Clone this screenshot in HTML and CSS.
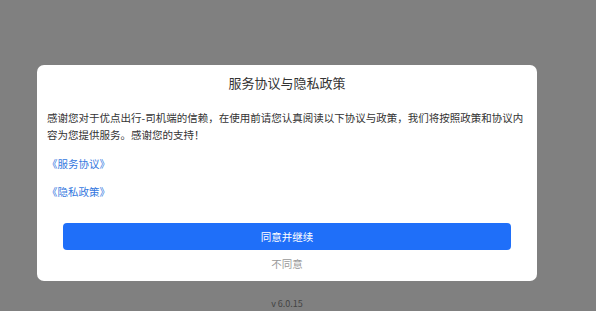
FILE: index.html
```html
<!DOCTYPE html>
<html lang="zh-CN">
<head>
    <meta charset="UTF-8">
    <meta name="viewport" content="width=device-width, initial-scale=1.0">
    <title>服务协议与隐私政策</title>
    <link rel="stylesheet" href="styles.css">
</head>
<body>
    <div class="mask">
        <div class="dialog">
            <h3 class="dialog-title">服务协议与隐私政策</h3>
            <p class="dialog-text">感谢您对于优点出行-司机端的信赖，在使用前请您认真阅读以下协议与政策，我们将按照政策和协议内容为您提供服务。感谢您的支持！</p>
            <a class="dialog-link" href="#">《服务协议》</a>
            <a class="dialog-link" href="#">《隐私政策》</a>
            <button class="btn-agree">同意并继续</button>
            <div class="btn-refuse">不同意</div>
        </div>
        <div class="version">v 6.0.15</div>
    </div>
</body>
</html>
```

FILE: styles.css
```css
* {
    box-sizing: border-box;
}

body {
    margin: 0;
    font-family: "Noto Sans CJK SC", "Noto Sans", sans-serif;
    background-color: #808080;
}

.mask {
    height: 311px;
    padding: 65px 22px 0 0;
    display: flex;
    flex-direction: column;
    align-items: center;
}

.dialog {
    width: 500px;
    height: 216px;
    background-color: #fff;
    border-radius: 7px;
    padding: 0 10px;
    display: flex;
    flex-direction: column;
}

.dialog-title {
    margin: 0;
    height: 36px;
    line-height: 36px;
    text-align: center;
    font-size: 13px;
    font-weight: normal;
    color: #333;
}

.dialog-text {
    margin: 8px 0 0;
    font-size: 10.5px;
    line-height: 17px;
    color: #333;
}

.dialog-link {
    display: block;
    margin-top: 12px;
    font-size: 10.5px;
    line-height: 17px;
    color: #3478e0;
    text-decoration: none;
}

.dialog-link + .dialog-link {
    margin-top: 11px;
}

.btn-agree {
    margin: 23px 16px 0;
    height: 27px;
    border: none;
    border-radius: 4px;
    background-color: #1f6ff9;
    color: #fff;
    font-family: inherit;
    font-size: 10.5px;
}

.btn-refuse {
    margin-top: 5px;
    text-align: center;
    font-size: 10.5px;
    line-height: 17px;
    color: #999;
}

.version {
    margin-top: 17px;
    font-size: 9px;
    line-height: 12px;
    color: #444;
}
```
